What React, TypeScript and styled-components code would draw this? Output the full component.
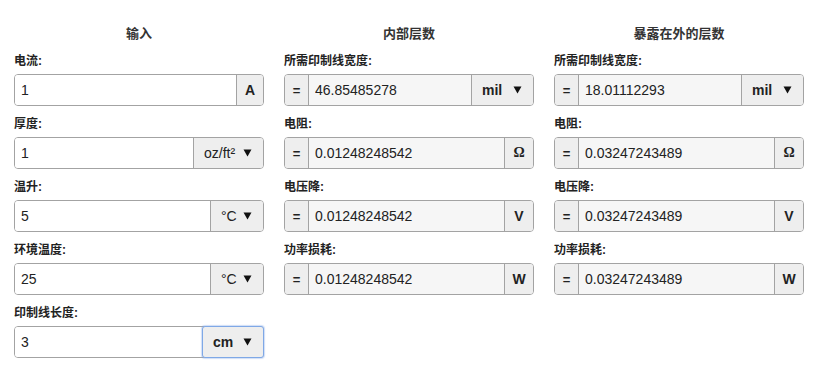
import React from "react";
import styled, { createGlobalStyle } from "styled-components";

const Global = createGlobalStyle`
  html, body { margin: 0; padding: 0; background: #fff; }
  body { font-family: "Liberation Sans", Arial, "Noto Sans CJK SC", sans-serif; color: #222; }
  * { box-sizing: border-box; }
`;

const Page = styled.div`
  display: grid;
  grid-template-columns: repeat(3, 250px);
  column-gap: 20px;
  padding: 24px 14px 0 14px;
`;

const Column = styled.section`
  display: flex;
  flex-direction: column;
`;

const Heading = styled.h3`
  margin: 0 0 9px 0;
  font-family: "Liberation Sans", Arial, "Noto Sans CJK SC", sans-serif;
  font-size: 13px;
  line-height: 20px;
  font-weight: bold;
  text-align: center;
  color: #333;
`;

const Field = styled.div`
  display: flex;
  flex-direction: column;
  margin-bottom: 10px;
`;

const Label = styled.label`
  font-family: "Liberation Sans", Arial, "Noto Sans CJK SC", sans-serif;
  font-size: 12px;
  line-height: 17px;
  font-weight: bold;
  color: #222;
  margin-bottom: 4px;
`;

const Group = styled.div`
  display: flex;
  height: 32px;
  border: 1px solid #a3a3a3;
  border-radius: 4px;
  position: relative;
`;

const Eq = styled.span`
  flex: 0 0 24px;
  display: flex;
  align-items: center;
  justify-content: center;
  background: #eeeeee;
  border-right: 1px solid #a3a3a3;
  border-radius: 3px 0 0 3px;
  font-size: 13px;
  font-weight: bold;
  color: #222;
`;

const Input = styled.input<{ $readOnlyLook?: boolean }>`
  flex: 1 1 auto;
  min-width: 0;
  border: none;
  outline: none;
  margin: 0;
  padding: 0 6px;
  font-family: "Liberation Sans", Arial, sans-serif;
  font-size: 14px;
  color: #222;
  background: ${(p) => (p.$readOnlyLook ? "#f6f6f6" : "#fff")};
  border-radius: ${(p) => (p.$readOnlyLook ? "0" : "3px 0 0 3px")};
`;

const Unit = styled.span<{ $w: number; $serif?: boolean }>`
  flex: 0 0 ${(p) => p.$w}px;
  display: flex;
  align-items: center;
  justify-content: center;
  background: #eeeeee;
  border-left: 1px solid #a3a3a3;
  border-radius: 0 3px 3px 0;
  font-family: ${(p) => (p.$serif ? '"Liberation Serif", "Times New Roman", serif' : '"Liberation Sans", Arial, sans-serif')};
  font-size: 14px;
  font-weight: bold;
  color: #222;
`;

const Select = styled.div<{ $w: number; $focus?: boolean; $light?: boolean }>`
  flex: 0 0 ${(p) => p.$w}px;
  display: flex;
  align-items: center;
  justify-content: space-between;
  padding: 0 11px 0 10px;
  background: #eeeeee;
  border-left: 1px solid #a3a3a3;
  border-radius: 0 3px 3px 0;
  font-family: "Liberation Sans", Arial, sans-serif;
  font-size: 14px;
  font-weight: ${(p) => (p.$light ? "normal" : "bold")};
  color: #222;
  ${(p) =>
    p.$focus
      ? `
    margin: -1px -1px -1px 0;
    border: 1px solid #7fa8e6;
    box-shadow: 0 0 1px 1px rgba(120,160,230,0.35);
    border-radius: 3px;
  `
      : ""}
`;

const Arrow = () => (
  <svg width="9" height="8" viewBox="0 0 9 8">
    <path d="M0.5 0.5 H8.5 L4.5 7.5 Z" fill="#111" />
  </svg>
);

type InputDef = { label: string; value: string; unit: string; kind: "unit" | "select"; w: number; focus?: boolean; light?: boolean };

const inputs: InputDef[] = [
  { label: "电流:", value: "1", unit: "A", kind: "unit", w: 27 },
  { label: "厚度:", value: "1", unit: "oz/ft²", kind: "select", w: 70, light: true },
  { label: "温升:", value: "5", unit: "°C", kind: "select", w: 53, light: true },
  { label: "环境温度:", value: "25", unit: "°C", kind: "select", w: 53, light: true },
  { label: "印制线长度:", value: "3", unit: "cm", kind: "select", w: 62, focus: true },
];

type OutDef = { label: string; unit: string; kind: "unit" | "select"; w: number; serif?: boolean };
const outDefs: OutDef[] = [
  { label: "所需印制线宽度:", unit: "mil", kind: "select", w: 62 },
  { label: "电阻:", unit: "Ω", kind: "unit", w: 29, serif: true },
  { label: "电压降:", unit: "V", kind: "unit", w: 29 },
  { label: "功率损耗:", unit: "W", kind: "unit", w: 29 },
];

const internalVals = ["46.85485278", "0.01248248542", "0.01248248542", "0.01248248542"];
const externalVals = ["18.01112293", "0.03247243489", "0.03247243489", "0.03247243489"];

type UnitProps = { kind: string; unit: string; w: number; focus?: boolean; light?: boolean; serif?: boolean };

const UnitPart = ({ kind, unit, w, focus, light, serif }: UnitProps) =>
  kind === "select" ? (
    <Select $w={w} $focus={focus} $light={light}>
      <span>{unit}</span>
      <Arrow />
    </Select>
  ) : (
    <Unit $w={w} $serif={serif}>{unit}</Unit>
  );

const OutputColumn = ({ title, values }: { title: string; values: string[] }) => (
  <Column>
    <Heading>{title}</Heading>
    {outDefs.map((d, i) => (
      <Field key={i}>
        <Label>{d.label}</Label>
        <Group>
          <Eq>=</Eq>
          <Input $readOnlyLook readOnly value={values[i]} />
          <UnitPart kind={d.kind} unit={d.unit} w={d.w} serif={d.serif} />
        </Group>
      </Field>
    ))}
  </Column>
);

export default function App() {
  return (
    <>
      <Global />
      <Page>
        <Column>
          <Heading>输入</Heading>
          {inputs.map((d, i) => (
            <Field key={i}>
              <Label>{d.label}</Label>
              <Group>
                <Input defaultValue={d.value} />
                <UnitPart kind={d.kind} unit={d.unit} w={d.w} focus={d.focus} light={d.light} />
              </Group>
            </Field>
          ))}
        </Column>
        <OutputColumn title="内部层数" values={internalVals} />
        <OutputColumn title="暴露在外的层数" values={externalVals} />
      </Page>
    </>
  );
}
